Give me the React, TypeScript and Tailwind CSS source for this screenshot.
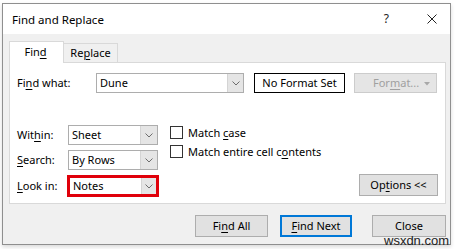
import React from "react";

const U = ({ children }: { children: React.ReactNode }) => (
  <span className="underline underline-offset-[2px] decoration-[1px]">{children}</span>
);

const Chevron = () => (
  <svg width="8" height="5" viewBox="0 0 8 5" className="block">
    <path d="M0.5 0.5 L4 4 L7.5 0.5" fill="none" stroke="#6d6d6d" strokeWidth="1" />
  </svg>
);

const Select = ({ value, red }: { value: string; red?: boolean }) => (
  <div
    className={
      red
        ? "w-[92px] h-[22px] border-[3px] border-[#e0000a] bg-white flex items-stretch"
        : "w-[90px] h-[20px] border border-[#adadad] bg-white flex items-stretch"
    }
  >
    <div className={red ? "flex-1 pl-[3px] flex items-center" : "flex-1 pl-[3px] flex items-center"}>{value}</div>
    <div
      className={
        red
          ? "w-[15px] bg-[#e5e5e5] border-l border-[#d4d4d4] flex items-center justify-center"
          : "w-[17px] bg-[#e5e5e5] border-l border-[#d4d4d4] flex items-center justify-center"
      }
    >
      <Chevron />
    </div>
  </div>
);

const Checkbox = ({ children }: { children: React.ReactNode }) => (
  <div className="flex items-center h-[13px]">
    <div className="w-[13px] h-[13px] border border-[#333333] bg-white" />
    <span className="ml-[5px] leading-none">{children}</span>
  </div>
);

export default function App() {
  return (
    <div
      className="w-[458px] h-[249px] bg-white relative overflow-hidden text-[11px] text-black"
      style={{ fontFamily: '"Segoe UI", "Noto Sans", sans-serif' }}
    >
      <div className="ml-[2px] mt-[3px] w-[449px] h-[242px] border border-[#8f8f8f] bg-[#f0f0f0] flex flex-col shadow-[0_2px_4px_rgba(0,0,0,0.15)]">
        {/* Title bar */}
        <div className="h-[30px] bg-white flex items-center pl-[9px] shrink-0">
          <span className="text-[11.5px] mt-[1px]">Find and Replace</span>
          <span className="ml-auto mr-[38px] text-[12px] text-[#222]">?</span>
          <svg width="10" height="10" viewBox="0 0 10 10" className="mr-[13px]">
            <path d="M0.5 0.5 L9.5 9.5 M9.5 0.5 L0.5 9.5" stroke="#222" strokeWidth="1" />
          </svg>
        </div>

        {/* Body */}
        <div className="pl-[6px] pt-[7px] flex flex-col">
          {/* Tabs */}
          <div className="flex items-end h-[21px] relative z-10">
            <div className="w-[55px] h-[22px] -mb-[1px] bg-white border border-b-0 border-[#d9d9d9] flex items-center justify-center">
              <span className="-ml-[2px]">
                Fin<U>d</U>
              </span>
            </div>
            <div className="w-[54px] h-[19px] bg-[#f0f0f0] border border-l-0 border-b-0 border-[#d9d9d9] flex items-center justify-center">
              <span>
                Re<U>p</U>lace
              </span>
            </div>
          </div>

          {/* Panel */}
          <div className="w-[437px] h-[142px] bg-white border border-[#d9d9d9] pl-[7px] pr-[7px] pt-[10px] flex flex-col">
            {/* Row 1 */}
            <div className="flex items-center h-[20px]">
              <div className="w-[79px]">
                Fi<U>n</U>d what:
              </div>
              <div className="w-[148px] h-[20px] border border-[#adadad] bg-white flex items-stretch">
                <div className="flex-1 pl-[3px] flex items-center">Dune</div>
                <div className="w-[16px] bg-[#e5e5e5] border-l border-[#d4d4d4] flex items-center justify-center">
                  <Chevron />
                </div>
              </div>
              <div className="ml-[10px] w-[91px] h-[20px] border border-black flex items-center justify-center">
                No Format Set
              </div>
              <div className="ml-[9px] w-[83px] h-[20px] border border-[#cccccc] bg-[#e5e5e5] text-[#a0a0a0] flex items-center relative">
                <span className="ml-[18px]">
                  For<U>m</U>at...
                </span>
                <svg width="6" height="4" viewBox="0 0 6 4" className="absolute right-[6px] top-[8px]">
                  <path d="M0 0 L6 0 L3 3.5 Z" fill="#a8a8a8" />
                </svg>
              </div>
            </div>

            {/* Row 2 */}
            <div className="flex mt-[32px]">
              <div className="flex flex-col gap-[5px]">
                <div className="flex items-center">
                  <div className="w-[51px]">
                    Wit<U>h</U>in:
                  </div>
                  <Select value="Sheet" />
                </div>
                <div className="flex items-center">
                  <div className="w-[51px]">
                    <U>S</U>earch:
                  </div>
                  <Select value="By Rows" />
                </div>
                <div className="flex items-center">
                  <div className="w-[50px]">
                    <U>L</U>ook in:
                  </div>
                  <Select value="Notes" red />
                </div>
              </div>
              <div className="ml-[11px] mt-[1px] flex flex-col gap-[6px]">
                <Checkbox>
                  Match <U>c</U>ase
                </Checkbox>
                <Checkbox>
                  Match entire cell c<U>o</U>ntents
                </Checkbox>
              </div>
              <div className="ml-auto mt-[49px] w-[79px] h-[22px] bg-[#e1e1e1] border border-[#adadad] flex items-center justify-center">
                <span>
                  Op<U>t</U>ions &lt;&lt;
                </span>
              </div>
            </div>
          </div>

          {/* Bottom buttons */}
          <div className="flex mt-[11px] h-[22px]">
            <div className="ml-[186px] w-[73px] h-[22px] bg-[#e1e1e1] border border-[#adadad] flex items-center justify-center">
              <span>
                Fi<U>n</U>d All
              </span>
            </div>
            <div className="ml-[12px] w-[72px] h-[22px] bg-[#e1e1e1] border-2 border-[#0078d7] flex items-center justify-center">
              <span>
                <U>F</U>ind Next
              </span>
            </div>
            <div className="ml-[20px] w-[74px] h-[22px] bg-[#e1e1e1] border border-[#adadad] flex items-center justify-center">
              <span>Close</span>
            </div>
          </div>
        </div>
      </div>

      <div
        className="absolute left-[384px] top-[234px] text-[13px] leading-none text-[#222]"
        style={{ fontFamily: '"Liberation Sans", Arial, sans-serif' }}
      >
        wsxdn.com
      </div>
    </div>
  );
}
